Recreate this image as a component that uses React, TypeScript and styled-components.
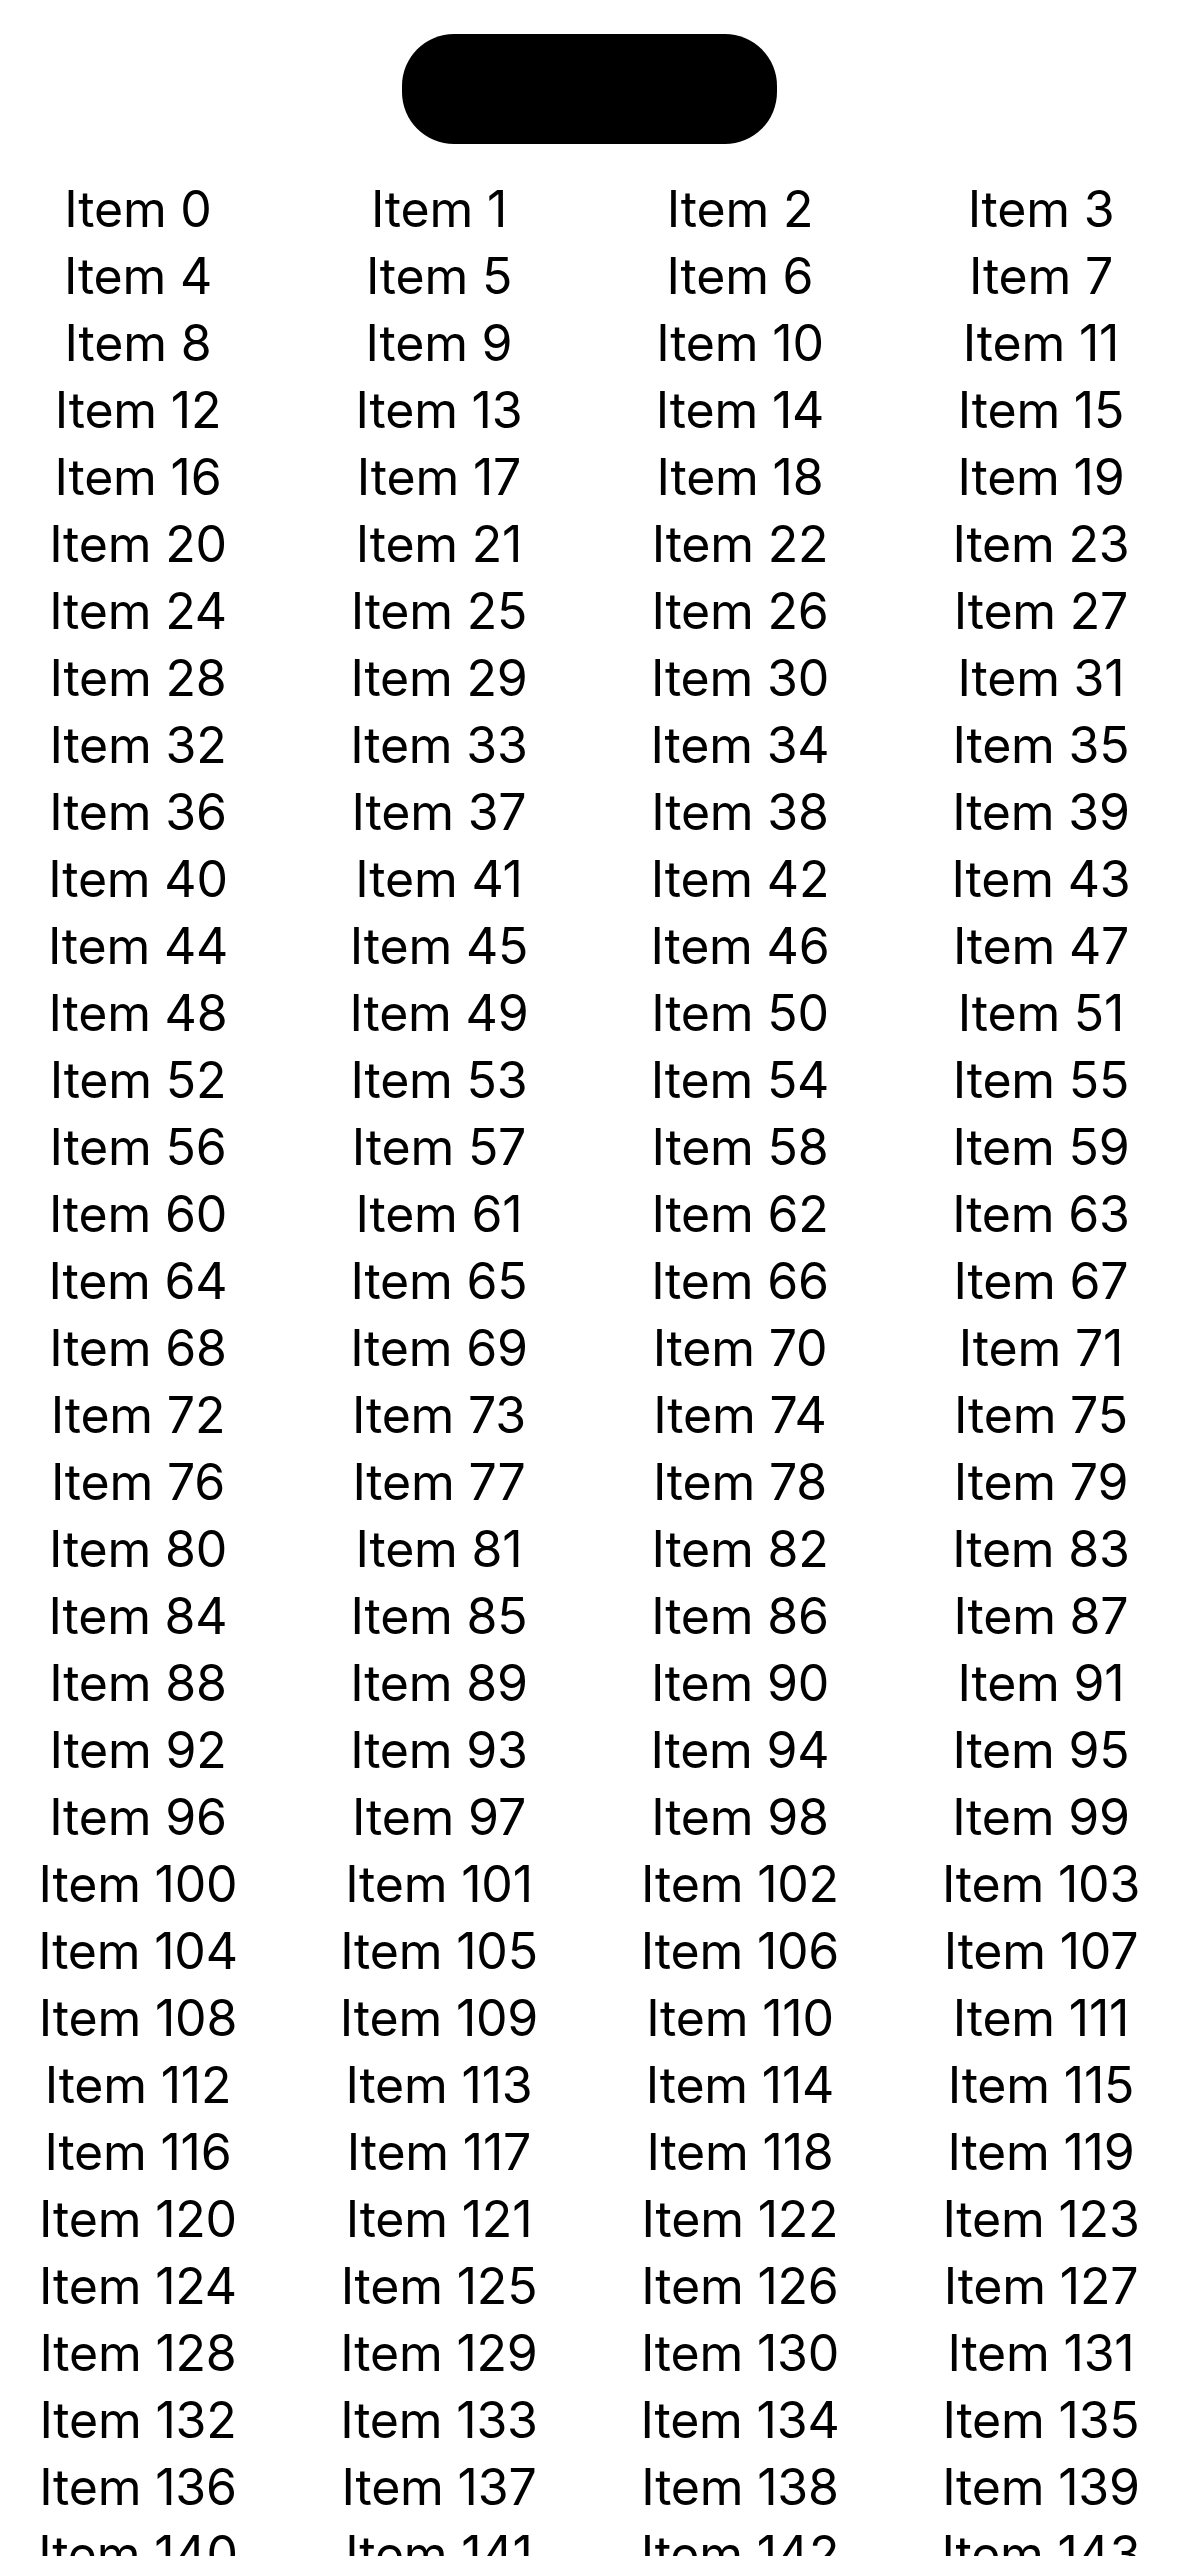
import React from "react";
import styled, { createGlobalStyle } from "styled-components";

const GlobalStyle = createGlobalStyle`
  html, body {
    margin: 0;
    padding: 0;
    background: #ffffff;
    overflow: hidden;
  }
  body {
    font-family: Inter, "Noto Sans", "Liberation Sans", sans-serif;
    color: #000000;
  }
`;

const Screen = styled.div`
  width: 1179px;
  height: 2556px;
  overflow: hidden;
  display: flex;
  flex-direction: column;
  align-items: center;
  background: #ffffff;
`;

const Island = styled.div`
  margin-top: 34px;
  width: 375px;
  height: 110px;
  border-radius: 52px;
  background: #000000;
  flex-shrink: 0;
`;

const Grid = styled.div`
  margin-top: 32px;
  width: 100%;
  display: grid;
  grid-template-columns: repeat(4, 276px);
  column-gap: 25px;
  justify-content: center;
`;

const Cell = styled.div`
  height: 67px;
  line-height: 67px;
  font-size: 50px;
  font-weight: 400;
  text-align: center;
  white-space: nowrap;
  letter-spacing: -0.2px;
`;

const items = Array.from({ length: 160 }, (_, i) => i);

export default function App() {
  return (
    <>
      <GlobalStyle />
      <Screen>
        <Island />
        <Grid>
          {items.map((i) => (
            <Cell key={i}>Item {i}</Cell>
          ))}
        </Grid>
      </Screen>
    </>
  );
}
